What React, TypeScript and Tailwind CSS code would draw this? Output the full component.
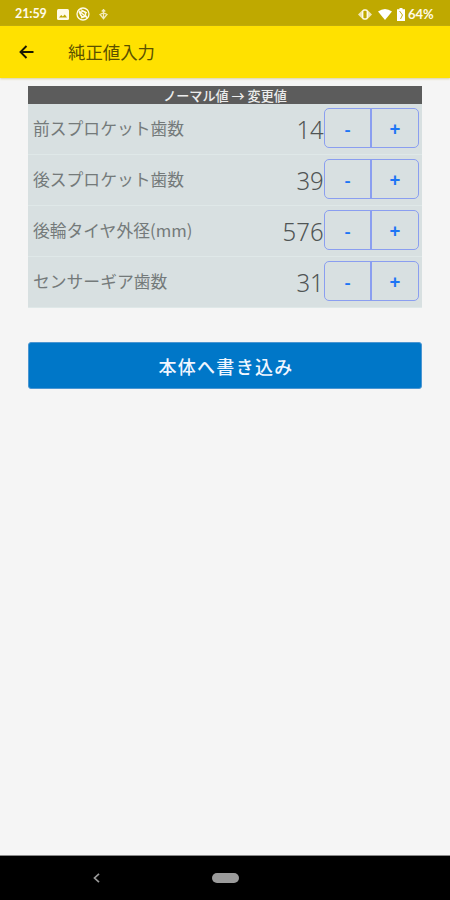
import React from "react";

const rows = [
  { label: "前スプロケット歯数", value: 14 },
  { label: "後スプロケット歯数", value: 39 },
  { label: "後輪タイヤ外径(mm)", value: 576 },
  { label: "センサーギア歯数", value: 31 },
];

const StatusBar = () => {
  return (
    <div className="flex h-[26px] items-center justify-between bg-[#bfa900] pl-[15px] pr-[14px] pt-[2px] font-['Lato',sans-serif] text-[12.5px] font-bold leading-none text-[#fffbe8]">
      <div className="flex items-center">
        <span className="w-[32px] tracking-[-0.1px]">21:59</span>
        <svg className="ml-[10px] h-[11px] w-[12px]" viewBox="0 0 12 11">
          <rect width="12" height="11" rx="1.5" fill="#fffbe8" />
          <path d="M2 8.5 4.2 6l1.6 1.5L7.8 5.5 10 8.5z" fill="#bfa900" />
        </svg>
        <svg
          className="ml-[7px] h-[14px] w-[14px]"
          viewBox="0 0 14 14"
          fill="none"
          stroke="#fffbe8"
          strokeWidth="1.3"
        >
          <circle cx="7" cy="7" r="6" />
          <circle cx="7" cy="7" r="2.6" />
          <path d="M4.5 2.5 11 6M3 5l3 5M5 10.8l6-1.8M2.5 3.5l9 7.5" />
        </svg>
        <svg
          className="ml-[9px] h-[11px] w-[9px]"
          viewBox="0 0 9 11"
          fill="none"
          stroke="#f3ebbd"
          strokeWidth="1.3"
        >
          <path d="M4.5 0v10M2.7 2.5l1.8-1.7 1.8 1.7M1 5.5 4.5 3.8 8 5.5 4.5 9.7z" />
        </svg>
      </div>
      <div className="flex items-center">
        <svg className="h-[11px] w-[14px]" viewBox="0 0 14 11">
          <path d="M4.5 1 0 5.5 4.5 10zM9.5 1 14 5.5 9.5 10z" fill="#efe6b4" />
          <rect
            x="4.7"
            y="1"
            width="4.6"
            height="9"
            rx="1.5"
            fill="#bfa900"
            stroke="#fffbe8"
            strokeWidth="1.4"
          />
        </svg>
        <svg className="ml-[6px] h-[11px] w-[14px]" viewBox="0 0 14 11">
          <path d="M0 2.6Q7-2.4 14 2.6L7 11z" fill="#fff" />
        </svg>
        <svg className="ml-[5px] h-[13px] w-[8px]" viewBox="0 0 8 13">
          <path d="M2.5 0h3v1.3H8V13H0V1.3h2.5z" fill="#fff" />
          <path d="m2.5 3 3 4-2 4" fill="none" stroke="#bfa900" strokeWidth=".9" />
        </svg>
        <span className="ml-[3px] w-[28px] whitespace-nowrap text-[13px]">
          64%
        </span>
      </div>
    </div>
  );
};

const Stepper = () => {
  return (
    <div className="mb-[2px] flex h-[40px] w-[95px] rounded-[5px] border border-[#8a9ef0] font-['Noto_Sans',sans-serif] text-[19px] text-[#1d75f5]">
      <button className="flex w-[47px] items-center justify-center border-r-2 border-[#8a9ef0] pt-[3px] font-medium">
        -
      </button>
      <button className="flex flex-1 items-center justify-center pt-[3px] font-bold">
        +
      </button>
    </div>
  );
};

const App = () => {
  return (
    <div className="flex h-[900px] w-[450px] flex-col overflow-hidden bg-[#f5f5f5] font-['Noto_Sans_CJK_JP',sans-serif]">
      <StatusBar />
      <header className="flex h-[52px] items-center bg-[#ffe100] shadow-[0_1px_2px_#d8d0a0]">
        <svg
          className="ml-[19px] h-[14px] w-[15px]"
          viewBox="0 0 15 14"
          fill="none"
          stroke="#1a1800"
          strokeWidth="1.9"
        >
          <path d="M14.5 7H1.5M7.5 1l-6 6 6 6" />
        </svg>
        <h1 className="ml-[34px] text-[17.4px] leading-none text-[#5a5000]">
          純正値入力
        </h1>
      </header>
      <main className="flex-1 px-[28px] pt-[8px]">
        <div className="w-[394px]">
          <div className="flex h-[18px] items-center justify-center bg-[#5c5c5c] pt-px text-[13.1px] font-medium leading-none text-[#ececec]">
            ノーマル値 → 変更値
          </div>
          {rows.map((row) => (
            <div
              key={row.label}
              className="flex h-[51px] items-center border-b border-[#dfe8e8] bg-[#d8e0e1] pl-[5px] pr-[3px]"
            >
              <span className="mb-px text-[16.8px] leading-none text-[#747a7a]">
                {row.label}
              </span>
              <span className="ml-auto origin-right scale-x-[0.92] font-['Noto_Sans',sans-serif] text-[26px] font-light leading-none text-[#505555]">
                {row.value}
              </span>
              <Stepper />
            </div>
          ))}
        </div>
        <button className="mt-[34px] flex h-[47px] w-[394px] items-center justify-center rounded-[3px] border border-[#4b96d2] bg-[#0077c8] pl-[2px] text-[18px] font-medium leading-none tracking-[1.3px] text-[#f0f6ff]">
          本体へ書き込み
        </button>
      </main>
      <nav className="flex h-[45px] items-center border-t border-[#8a8a8a] bg-black">
        <svg
          className="ml-[93px] h-[10px] w-[7px]"
          viewBox="0 0 7 10"
          fill="none"
          stroke="#999"
          strokeWidth="1.7"
        >
          <path d="M6 .8 1.5 5 6 9.2" />
        </svg>
        <div className="ml-[112px] h-[10px] w-[27px] rounded-full bg-[#9b9b9b]" />
      </nav>
    </div>
  );
};

export default App;
